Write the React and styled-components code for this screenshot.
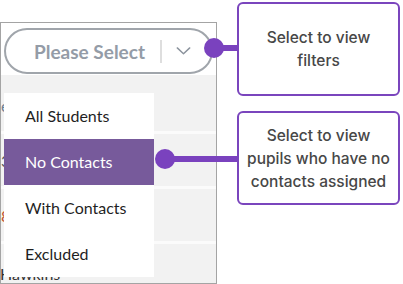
import React from 'react'
import styled, { createGlobalStyle } from 'styled-components'

const GlobalStyle = createGlobalStyle`
  html, body {
    margin: 0;
    padding: 0;
    background: #ffffff;
  }
  body {
    width: 403px;
    height: 284px;
    overflow: hidden;
    font-family: Lato, "Liberation Sans", sans-serif;
  }
`

const options = ['All Students', 'No Contacts', 'With Contacts', 'Excluded']
const tableRows = [
  { label: 'e', color: '#6d7f96' },
  { label: '3', color: '#5a5a5a' },
  { label: '8', color: '#c0532e' },
]

const App = () => {
  return (
    <>
      <GlobalStyle />
      <Page>
        <Frame>
          <SelectBar>
            <Pill>
              <PillLabel>Please Select</PillLabel>
              <Divider />
              <Chevron viewBox="0 0 16 9" width="15" height="8">
                <path d="M1 1l7 6.5L15 1" />
              </Chevron>
            </Pill>
          </SelectBar>

          <Table>
            {tableRows.map((row, i) => (
              <TableRow key={i}>
                <Cell style={{ color: row.color }}>{row.label}</Cell>
              </TableRow>
            ))}
            <LastName>Hawkins</LastName>
          </Table>

          <Menu>
            {options.map(option => (
              <MenuItem key={option} active={option === 'No Contacts'}>
                {option}
              </MenuItem>
            ))}
          </Menu>
        </Frame>

        <Callouts>
          <Callout>
            Select to view
            <br />
            filters
          </Callout>
          <Callout>
            Select to view
            <br />
            pupils who have no
            <br />
            contacts assigned
          </Callout>
        </Callouts>

        <Connector top={48} left={204} width={34} />
        <Connector top={159} left={155} width={83} />
      </Page>
    </>
  )
}

const Page = styled.div`
  position: relative;
  display: flex;
  gap: 20px;
  width: 403px;
  height: 284px;
`

const Frame = styled.div`
  position: relative;
  box-sizing: border-box;
  width: 217px;
  margin-top: 22px;
  height: 262px;
  border: 1px solid #a4a4a4;
  background: #ffffff;
  overflow: hidden;
  display: flex;
  flex-direction: column;
`

const SelectBar = styled.div`
  padding: 5px 3px 0 3px;
  height: 63px;
  box-sizing: border-box;
`

const Pill = styled.div`
  box-sizing: border-box;
  height: 46px;
  width: 209px;
  border: 2px solid #a0a5ab;
  border-radius: 23px;
  display: flex;
  align-items: center;
  padding-left: 28px;
`

const PillLabel = styled.span`
  font-family: Lato, "Liberation Sans", sans-serif;
  font-weight: 700;
  font-size: 19px;
  color: #949ca7;
`

const Divider = styled.span`
  width: 2px;
  height: 23px;
  background: #dedede;
  margin-left: 15px;
`

const Chevron = styled.svg`
  margin-left: 14px;
  fill: none;
  stroke: #8b939d;
  stroke-width: 1.6;
  stroke-linecap: round;
  stroke-linejoin: round;
`

const Table = styled.div`
  flex: 1;
  background: #f2f2f2;
  padding-top: 4px;
  display: flex;
  flex-direction: column;
`

const TableRow = styled.div`
  height: 52px;
  border-bottom: 3px solid #fbfbfb;
  display: flex;
  align-items: center;
`

const Cell = styled.span`
  font-size: 16px;
`

const LastName = styled.div`
  font-size: 16px;
  line-height: 18px;
  color: #333;
  margin-top: 21px;
  margin-left: -1px;
`

const Menu = styled.ul`
  position: absolute;
  top: 70px;
  left: 3px;
  width: 150px;
  margin: 0;
  padding: 0;
  list-style: none;
  background: #ffffff;
  display: flex;
  flex-direction: column;
`

const MenuItem = styled.li`
  height: 46px;
  display: flex;
  align-items: center;
  padding-left: 21px;
  padding-bottom: 2px;
  box-sizing: border-box;
  font-family: Lato, "Liberation Sans", sans-serif;
  font-size: 16px;
  color: ${p => (p.active ? '#ffffff' : '#1f1f1f')};
  background: ${p => (p.active ? '#775a9b' : 'transparent')};
`

const Callouts = styled.div`
  display: flex;
  flex-direction: column;
  gap: 15px;
  padding-top: 2px;
`

const Callout = styled.div`
  box-sizing: border-box;
  width: 163px;
  height: 94px;
  border: 2px solid #7a45bd;
  border-radius: 6px;
  display: flex;
  align-items: center;
  justify-content: center;
  text-align: center;
  padding: 0 2px;
  font-family: Inter, "Open Sans", sans-serif;
  font-weight: 500;
  font-size: 15.5px;
  line-height: 23px;
  color: #474747;
`

const Connector = styled.div`
  position: absolute;
  top: ${p => p.top - 10}px;
  left: ${p => p.left}px;
  width: ${p => p.width}px;
  height: 20px;

  &::before {
    content: '';
    position: absolute;
    left: 0;
    top: 0;
    width: 20px;
    height: 20px;
    border-radius: 50%;
    background: #7a42be;
  }

  &::after {
    content: '';
    position: absolute;
    left: 10px;
    right: 0;
    top: 7px;
    height: 6px;
    background: #7a42be;
  }
`

export default App
